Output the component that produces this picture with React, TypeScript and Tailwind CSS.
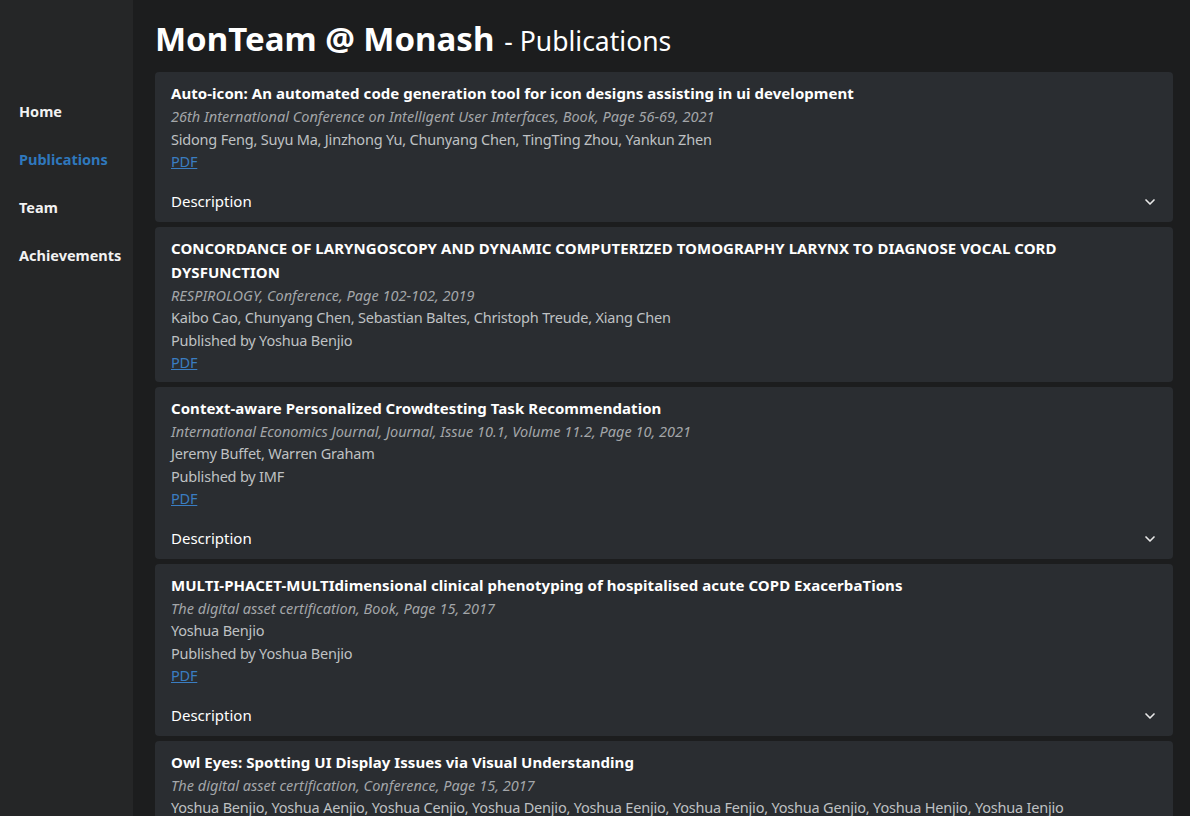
import { ChevronDown } from "lucide-react"

type Pub = {
  title: string
  venue: string
  authors: string
  publisher?: string
  desc?: boolean
}

const pubs: Pub[] = [
  {
    title: "Auto-icon: An automated code generation tool for icon designs assisting in ui development",
    venue: "26th International Conference on Intelligent User Interfaces, Book, Page 56-69, 2021",
    authors: "Sidong Feng, Suyu Ma, Jinzhong Yu, Chunyang Chen, TingTing Zhou, Yankun Zhen",
    desc: true,
  },
  {
    title:
      "CONCORDANCE OF LARYNGOSCOPY AND DYNAMIC COMPUTERIZED TOMOGRAPHY LARYNX TO DIAGNOSE VOCAL CORD DYSFUNCTION",
    venue: "RESPIROLOGY, Conference, Page 102-102, 2019",
    authors: "Kaibo Cao, Chunyang Chen, Sebastian Baltes, Christoph Treude, Xiang Chen",
    publisher: "Yoshua Benjio",
  },
  {
    title: "Context-aware Personalized Crowdtesting Task Recommendation",
    venue: "International Economics Journal, Journal, Issue 10.1, Volume 11.2, Page 10, 2021",
    authors: "Jeremy Buffet, Warren Graham",
    publisher: "IMF",
    desc: true,
  },
  {
    title: "MULTI-PHACET-MULTIdimensional clinical phenotyping of hospitalised acute COPD ExacerbaTions",
    venue: "The digital asset certification, Book, Page 15, 2017",
    authors: "Yoshua Benjio",
    publisher: "Yoshua Benjio",
    desc: true,
  },
  {
    title: "Owl Eyes: Spotting UI Display Issues via Visual Understanding",
    venue: "The digital asset certification, Conference, Page 15, 2017",
    authors:
      "Yoshua Benjio, Yoshua Aenjio, Yoshua Cenjio, Yoshua Denjio, Yoshua Eenjio, Yoshua Fenjio, Yoshua Genjio, Yoshua Henjio, Yoshua Ienjio",
    publisher: "Yoshua Benjio",
    desc: true,
  },
]

const nav = ["Home", "Publications", "Team", "Achievements"]

function PubCard({ p }: { p: Pub }) {
  return (
    <div className="bg-[#2a2d31] rounded-[4px]">
      <div className="px-4 pt-[9px] pb-2 text-[14.5px] leading-[22.5px] tracking-[-0.2px]">
        <div className="font-bold text-white text-[15px] leading-[24px] tracking-[0.05px]">{p.title}</div>
        <div className="italic text-[#a3a6a9] tracking-[0.02px]">{p.venue}</div>
        <div className="text-[#bfc1c3]">{p.authors}</div>
        {p.publisher && <div className="text-[#bfc1c3]">Published by {p.publisher}</div>}
        <a href="#" className="text-[#3a7dc2] underline">PDF</a>
      </div>
      {p.desc && (
        <div className="flex items-center justify-between pl-4 pr-[15px] mt-[1px] h-[40px] text-[15px] text-white">
          <span>Description</span>
          <ChevronDown size={16} strokeWidth={2.5} className="text-[#e8e8e8]" />
        </div>
      )}
    </div>
  )
}

export default function App() {
  return (
    <div
      className="flex h-[816px] overflow-hidden bg-[#1c1d1e]"
      style={{ fontFamily: '"Noto Sans", "Open Sans", sans-serif' }}
    >
      {/* sidebar */}
      <nav className="w-[133px] shrink-0 bg-[#252627] pt-[99px] pl-[19px] flex flex-col gap-[24px]">
        {nav.map((n) => (
          <a
            key={n}
            href="#"
            className={
              "text-[14.5px] leading-[24px] font-bold " +
              (n === "Publications" ? "text-[#2f78bd]" : "text-[#f2f2f2]")
            }
          >
            {n}
          </a>
        ))}
      </nav>

      {/* main */}
      <main className="flex-1 pl-[22px] pr-[17px] pt-[17px]">
        <h1 className="text-white leading-[44px] mb-[9px] flex items-baseline">
          <span className="text-[33px] font-bold">MonTeam @ Monash</span>
          <span className="text-[26.5px] ml-[10px]">- Publications</span>
        </h1>
        <div className="flex flex-col gap-[5px]">
          {pubs.map((p) => (
            <PubCard key={p.title} p={p} />
          ))}
        </div>
      </main>
    </div>
  )
}
